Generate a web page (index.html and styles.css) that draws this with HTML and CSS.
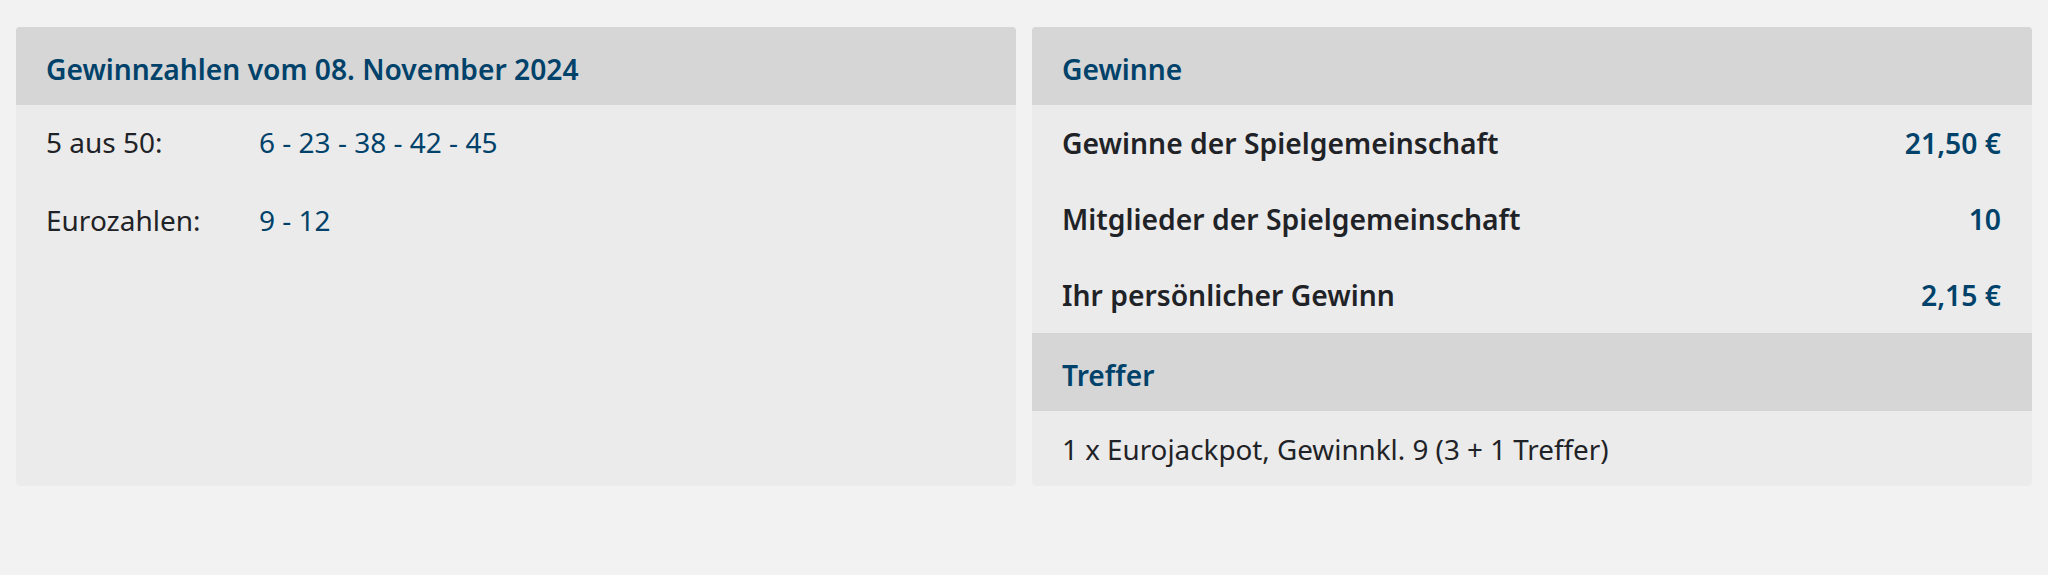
FILE: index.html
```html
<!DOCTYPE html>
<html lang="de">
<head>
<meta charset="utf-8">
<title>Gewinnzahlen</title>
<link rel="stylesheet" href="styles.css">
</head>
<body>
<div class="page">
  <section class="card">
    <h2 class="card-head">Gewinnzahlen vom 08. November 2024</h2>
    <div class="draw">
      <div class="draw-row">
        <span class="draw-label">5 aus 50:</span>
        <span class="draw-nums">6 - 23 - 38 - 42 - 45</span>
      </div>
      <div class="draw-row">
        <span class="draw-label">Eurozahlen:</span>
        <span class="draw-nums">9 - 12</span>
      </div>
    </div>
  </section>
  <section class="card">
    <h2 class="card-head">Gewinne</h2>
    <div class="stat-row">
      <span class="stat-label">Gewinne der Spielgemeinschaft</span>
      <span class="stat-value">21,50 €</span>
    </div>
    <div class="stat-row">
      <span class="stat-label">Mitglieder der Spielgemeinschaft</span>
      <span class="stat-value">10</span>
    </div>
    <div class="stat-row">
      <span class="stat-label">Ihr persönlicher Gewinn</span>
      <span class="stat-value">2,15 €</span>
    </div>
    <h2 class="card-head">Treffer</h2>
    <div class="hit-row">1 x Eurojackpot, Gewinnkl. 9 (3 + 1 Treffer)</div>
  </section>
</div>
</body>
</html>
```
FILE: styles.css
```css
html, body {
  margin: 0;
  background: #f2f2f2;
}

body {
  font-family: "Noto Sans", "Open Sans", sans-serif;
  font-size: 28px;
  color: #1f2327;
}

.page {
  display: grid;
  grid-template-columns: 1fr 1fr;
  gap: 16px;
  padding: 27px 16px;
  align-items: stretch;
}

.card {
  background: #ebebeb;
  border-radius: 4px;
  overflow: hidden;
}

.card-head {
  margin: 0;
  background: #d6d6d6;
  color: #00426a;
  font-size: 28.2px;
  font-weight: 600;
  line-height: 42px;
  padding: 21px 31px 15px 30px;
}

.draw-row {
  display: grid;
  grid-template-columns: 213px 1fr;
  padding: 16px 30px 20px;
  line-height: 42px;
}

.draw-label {
  color: #1f2327;
}

.draw-nums {
  color: #00426a;
}

.stat-row {
  display: flex;
  justify-content: space-between;
  align-items: baseline;
  padding: 17px 31px 17px 30px;
  font-size: 28.3px;
  line-height: 42px;
  font-weight: 600;
}

.stat-label {
  color: #1f2327;
}

.stat-value {
  color: #00426a;
}

.hit-row {
  padding: 17px 31px 16px 30px;
  font-size: 27.8px;
  line-height: 42px;
  color: #1f2327;
}
```
